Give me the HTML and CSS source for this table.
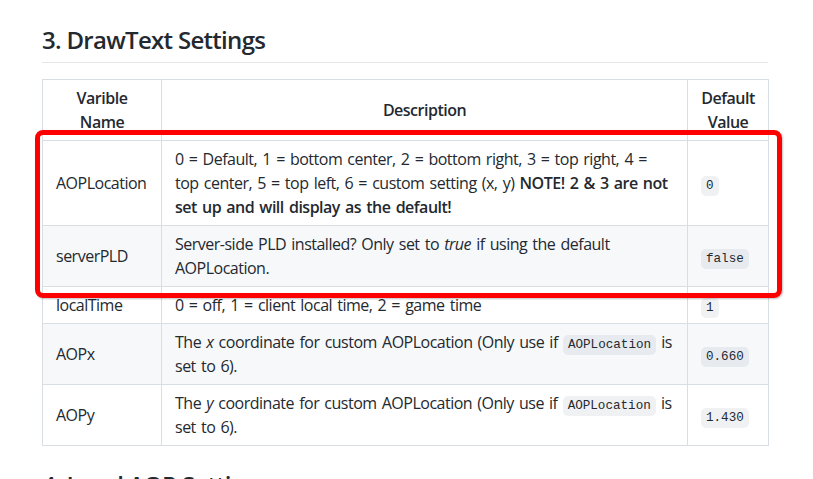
FILE: index.html
```html
<!DOCTYPE html>
<html>
<head>
<meta charset="utf-8">
<link rel="stylesheet" href="styles.css">
</head>
<body>
<div class="page">
  <h2 class="heading">3. DrawText Settings</h2>
  <table class="settings">
    <colgroup>
      <col class="c-name">
      <col class="c-desc">
      <col class="c-val">
    </colgroup>
    <thead>
      <tr>
        <th>Varible<br>Name</th>
        <th>Description</th>
        <th>Default<br>Value</th>
      </tr>
    </thead>
    <tbody>
      <tr>
        <td>AOPLocation</td>
        <td>0 = Default, 1 = bottom center, 2 = bottom right, 3 = top right, 4 = top center, 5 = top left, 6 = custom setting (x, y) <strong>NOTE! 2 &amp; 3 are not set up and will display as the default!</strong></td>
        <td><code>0</code></td>
      </tr>
      <tr>
        <td>serverPLD</td>
        <td>Server-side PLD installed? Only set to <em>true</em> if using the default AOPLocation.</td>
        <td><code>false</code></td>
      </tr>
      <tr>
        <td>localTime</td>
        <td>0 = off, 1 = client local time, 2 = game time</td>
        <td><code>1</code></td>
      </tr>
      <tr>
        <td>AOPx</td>
        <td>The <em>x</em> coordinate for custom AOPLocation (Only use if <code>AOPLocation</code> is set to 6).</td>
        <td><code>0.660</code></td>
      </tr>
      <tr>
        <td>AOPy</td>
        <td>The <em>y</em> coordinate for custom AOPLocation (Only use if <code>AOPLocation</code> is set to 6).</td>
        <td><code>1.430</code></td>
      </tr>
    </tbody>
  </table>
  <h2 class="heading">4. Local AOP Settings</h2>
</div>
<div class="highlight"></div>
</body>
</html>
```
FILE: styles.css
```css
html, body {
  margin: 0;
  padding: 0;
  background: #ffffff;
}
body {
  position: relative;
  overflow: hidden;
  height: 479px;
  font-family: "Open Sans", "Noto Sans", sans-serif;
  font-size: 16px;
  line-height: 24px;
  color: #24292f;
}
.page {
  width: 726px;
  padding: 25px 0 0 42px;
}
.heading {
  margin: 0 0 16px;
  padding-bottom: 7px;
  font-size: 24px;
  line-height: 30px;
  font-weight: 600;
  letter-spacing: -0.7px;
  border-bottom: 1px solid #e5e8eb;
}
.settings + .heading {
  margin-top: 24px;
}
.settings {
  width: 726px;
  border-collapse: collapse;
  border-spacing: 0;
  table-layout: fixed;
  letter-spacing: -0.5px;
  word-spacing: 1.5px;
}
.c-name { width: 119px; }
.c-desc { width: 526px; }
.c-val { width: 81px; }
.settings th,
.settings td {
  border: 1px solid #d8dee4;
  padding: 6px 13px;
  vertical-align: middle;
}
.settings th {
  font-weight: 600;
  text-align: center;
}
.settings tbody tr:nth-child(2n) {
  background: #f6f8fa;
}
.settings strong {
  font-weight: 600;
}
code {
  font-family: "Liberation Mono", "DejaVu Sans Mono", monospace;
  font-size: 12.6px;
  line-height: 1;
  letter-spacing: 0;
  word-spacing: 0;
  padding: 3px 5px;
  background: rgba(175, 184, 193, 0.2);
  border-radius: 5px;
}
.highlight {
  position: absolute;
  left: 35px;
  top: 130px;
  width: 737px;
  height: 158px;
  border: 5px solid #ff0000;
  border-radius: 8px;
  box-shadow: 1px 1px 2px rgba(0, 0, 0, 0.25);
}
```
